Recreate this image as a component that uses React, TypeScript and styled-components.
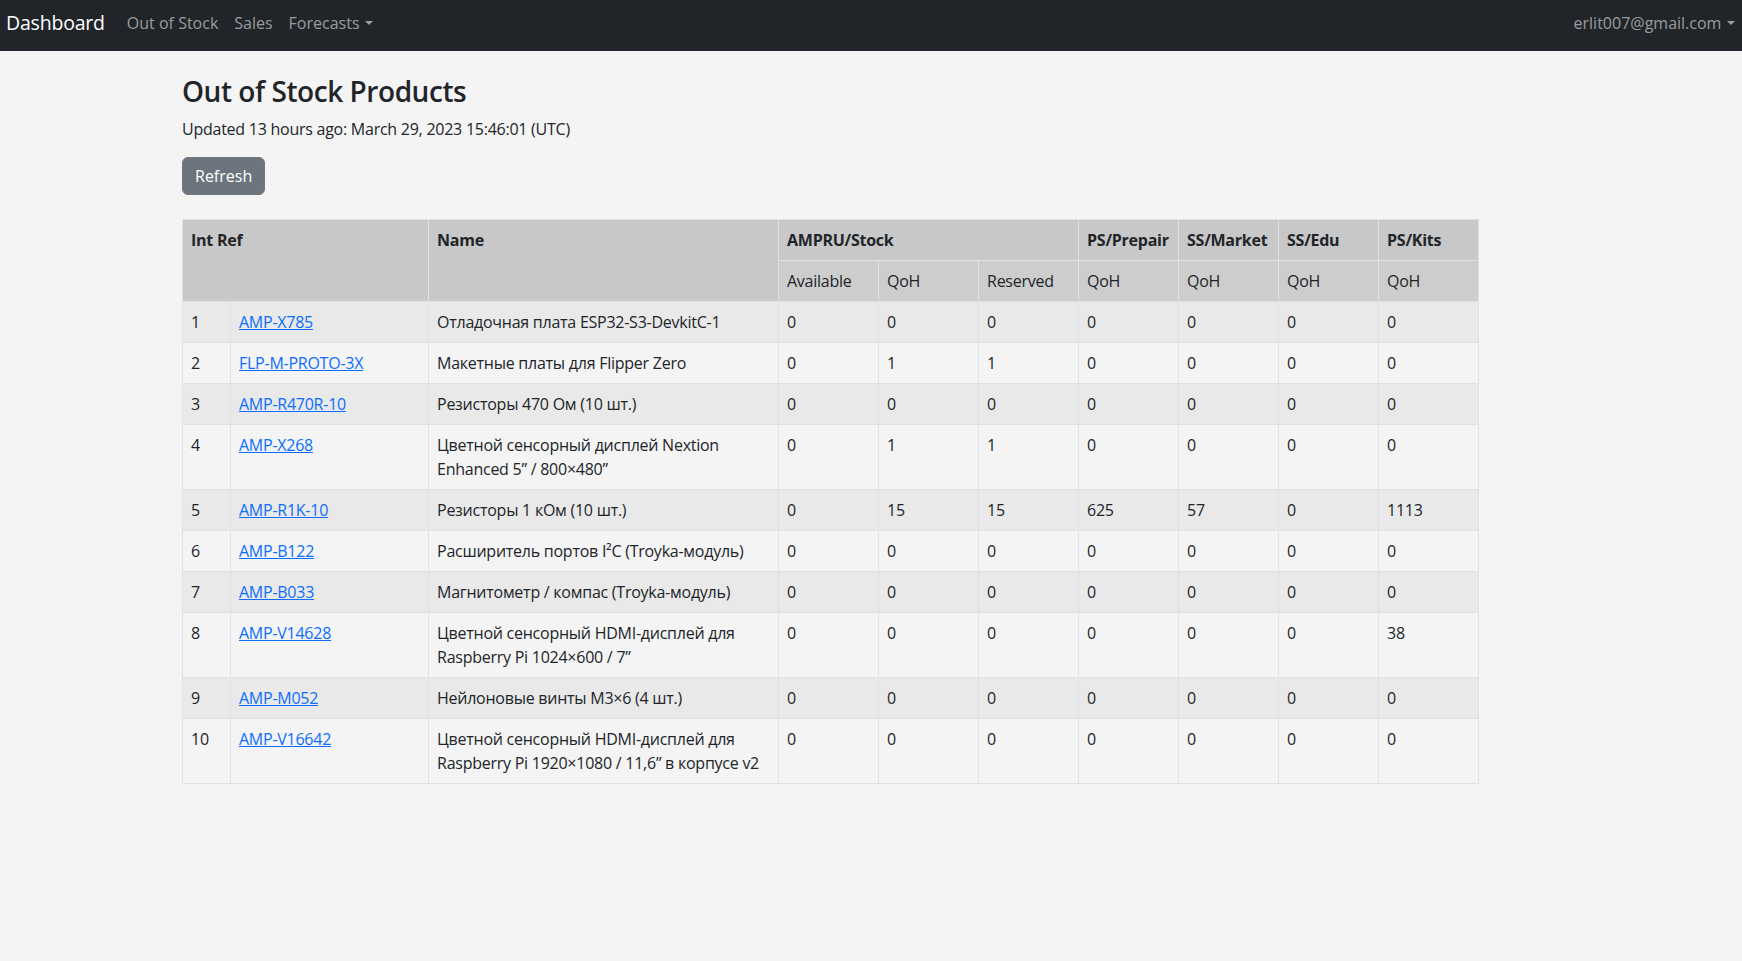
import React from "react";
import styled, { createGlobalStyle } from "styled-components";

const GlobalStyle = createGlobalStyle`
  * { box-sizing: border-box; }
  html, body { margin: 0; padding: 0; }
  body {
    background: #f4f4f4;
    color: #212529;
    font-family: "Open Sans", "Liberation Sans", sans-serif;
    font-size: 16px;
    line-height: 1.5;
  }
`;

const NavBar = styled.nav`
  height: 51px;
  background: #212529;
  display: flex;
  align-items: center;
  padding: 0 0 5px 6px;
`;

const Brand = styled.a`
  color: #fff;
  font-size: 19.5px;
  letter-spacing: -0.2px;
  line-height: 30px;
  margin-right: 14px;
  text-decoration: none;
`;

const NavLink = styled.a<{ $toggle?: boolean }>`
  color: rgba(255, 255, 255, 0.55);
  padding: 8px 8px;
  line-height: 24px;
  text-decoration: none;
  white-space: nowrap;
  &:last-child {
    padding-right: 7px;
  }
  ${(p) =>
    p.$toggle &&
    `
    &::after {
      content: "";
      display: inline-block;
      margin-left: 0.35em;
      vertical-align: 0.255em;
      border-top: 0.28em solid;
      border-right: 0.28em solid transparent;
      border-left: 0.28em solid transparent;
      border-bottom: 0;
    }
  `}
`;

const Spacer = styled.div`
  flex: 1;
`;

const Main = styled.main`
  width: 1296px;
  margin-left: 182px;
  padding-top: 24px;
  letter-spacing: -0.25px;
`;

const Title = styled.h3`
  margin: 0 0 8px;
  font-size: 28px;
  font-weight: 600;
  letter-spacing: -0.45px;
  line-height: 1.2;
`;

const Updated = styled.p`
  margin: 0 0 16px;
`;

const Button = styled.button`
  display: block;
  font-family: inherit;
  font-size: 16px;
  line-height: 24px;
  letter-spacing: 0;
  padding: 6px 12px;
  color: #fff;
  background: #6c757d;
  border: 1px solid #6c757d;
  border-radius: 6px;
  margin-bottom: 24px;
`;

const Table = styled.table`
  width: 1296px;
  table-layout: fixed;
  border-collapse: collapse;
  vertical-align: top;
  border: 1px solid #dee2e6;
`;

const HeadCell = styled.th<{ $bold?: boolean; $shade?: string }>`
  text-align: left;
  vertical-align: top;
  padding: 8px;
  font-weight: ${(p) => (p.$bold ? 700 : 400)};
  background: ${(p) => p.$shade || "#c8c8c8"};
  border: 1px solid #dee2e6;
  white-space: nowrap;
`;

const Row = styled.tr<{ $odd: boolean }>`
  background: ${(p) => (p.$odd ? "#e9e9e9" : "transparent")};
`;

const Cell = styled.td`
  padding: 8px;
  vertical-align: top;
  border: 1px solid #dee2e6;
`;

const RefLink = styled.a`
  color: #0d6efd;
  text-decoration: underline;
`;

type Product = { ref: string; name: string; values: number[] };

const Z = [0, 0, 0, 0, 0, 0, 0];

const products: Product[] = [
  { ref: "AMP-X785", name: "Отладочная плата ESP32-S3-DevkitC-1", values: Z },
  { ref: "FLP-M-PROTO-3X", name: "Макетные платы для Flipper Zero", values: [0, 1, 1, 0, 0, 0, 0] },
  { ref: "AMP-R470R-10", name: "Резисторы 470 Ом (10 шт.)", values: Z },
  {
    ref: "AMP-X268",
    name: "Цветной сенсорный дисплей Nextion Enhanced 5” / 800×480”",
    values: [0, 1, 1, 0, 0, 0, 0],
  },
  { ref: "AMP-R1K-10", name: "Резисторы 1 кОм (10 шт.)", values: [0, 15, 15, 625, 57, 0, 1113] },
  { ref: "AMP-B122", name: "Расширитель портов I²C (Troyka-модуль)", values: Z },
  { ref: "AMP-B033", name: "Магнитометр / компас (Troyka-модуль)", values: Z },
  {
    ref: "AMP-V14628",
    name: "Цветной сенсорный HDMI-дисплей для Raspberry Pi 1024×600 / 7”",
    values: [0, 0, 0, 0, 0, 0, 38],
  },
  { ref: "AMP-M052", name: "Нейлоновые винты M3×6 (4 шт.)", values: Z },
  {
    ref: "AMP-V16642",
    name: "Цветной сенсорный HDMI-дисплей для Raspberry Pi 1920×1080 / 11,6” в корпусе v2",
    values: Z,
  },
];

const SUB = "#cdcdcd";

export default function App() {
  return (
    <>
      <GlobalStyle />
      <NavBar>
        <Brand href="#">Dashboard</Brand>
        <NavLink href="#">Out of Stock</NavLink>
        <NavLink href="#">Sales</NavLink>
        <NavLink href="#" $toggle>
          Forecasts
        </NavLink>
        <Spacer />
        <NavLink href="#" $toggle>
          erlit007@gmail.com
        </NavLink>
      </NavBar>
      <Main>
        <Title>Out of Stock Products</Title>
        <Updated>Updated 13 hours ago: March 29, 2023 15:46:01 (UTC)</Updated>
        <Button>Refresh</Button>
        <Table>
          <colgroup>
            <col style={{ width: 48 }} />
            <col style={{ width: 198 }} />
            <col style={{ width: 350 }} />
            {Z.map((_, i) => (
              <col key={i} style={{ width: 100 }} />
            ))}
          </colgroup>
          <thead>
            <tr>
              <HeadCell $bold colSpan={2} rowSpan={2}>
                Int Ref
              </HeadCell>
              <HeadCell $bold rowSpan={2}>
                Name
              </HeadCell>
              <HeadCell $bold colSpan={3}>
                AMPRU/Stock
              </HeadCell>
              <HeadCell $bold>PS/Prepair</HeadCell>
              <HeadCell $bold>SS/Market</HeadCell>
              <HeadCell $bold>SS/Edu</HeadCell>
              <HeadCell $bold>PS/Kits</HeadCell>
            </tr>
            <tr>
              <HeadCell $shade={SUB}>Available</HeadCell>
              <HeadCell $shade={SUB}>QoH</HeadCell>
              <HeadCell $shade={SUB}>Reserved</HeadCell>
              <HeadCell $shade={SUB}>QoH</HeadCell>
              <HeadCell $shade={SUB}>QoH</HeadCell>
              <HeadCell $shade={SUB}>QoH</HeadCell>
              <HeadCell $shade={SUB}>QoH</HeadCell>
            </tr>
          </thead>
          <tbody>
            {products.map((p, i) => (
              <Row key={p.ref} $odd={i % 2 === 0}>
                <Cell>{i + 1}</Cell>
                <Cell>
                  <RefLink href="#">{p.ref}</RefLink>
                </Cell>
                <Cell>{p.name}</Cell>
                {p.values.map((v, j) => (
                  <Cell key={j}>{v}</Cell>
                ))}
              </Row>
            ))}
          </tbody>
        </Table>
      </Main>
    </>
  );
}
